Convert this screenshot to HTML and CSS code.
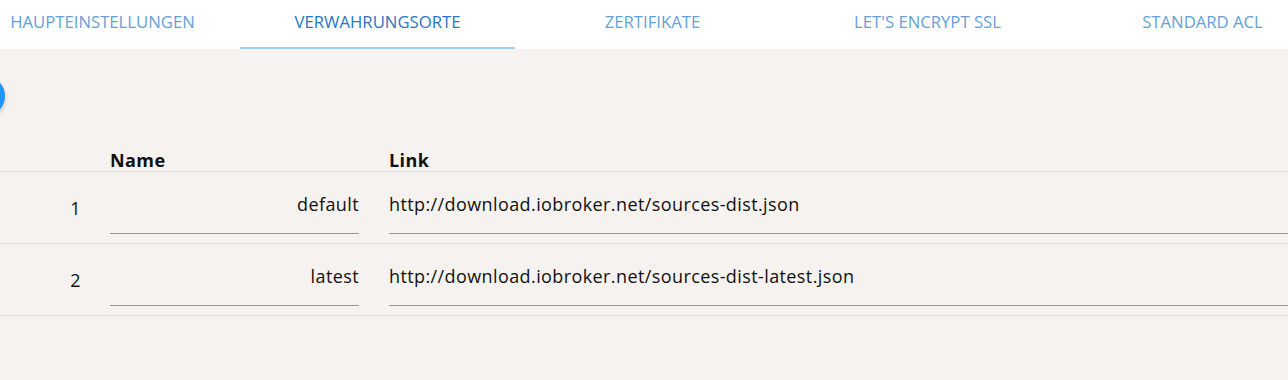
FILE: index.html
```html
<!DOCTYPE html>
<html lang="de">
<head>
<meta charset="utf-8">
<title>Verwahrungsorte</title>
<link rel="stylesheet" href="styles.css">
</head>
<body>
<div class="page">
  <nav class="tabs">
    <div class="tab">HAUPTEINSTELLUNGEN</div>
    <div class="tab active">VERWAHRUNGSORTE</div>
    <div class="tab">ZERTIFIKATE</div>
    <div class="tab">LET'S ENCRYPT SSL</div>
    <div class="tab">STANDARD ACL</div>
  </nav>
  <div class="toolbar">
    <button class="fab" aria-label="Hinzufügen"></button>
  </div>
  <div class="table">
    <div class="row head">
      <div class="cell idx"></div>
      <div class="cell">Name</div>
      <div class="cell">Link</div>
    </div>
    <div class="row">
      <div class="cell idx">1</div>
      <div class="field name">default</div>
      <div class="field link">http://download.iobroker.net/sources-dist.json</div>
    </div>
    <div class="row">
      <div class="cell idx">2</div>
      <div class="field name">latest</div>
      <div class="field link">http://download.iobroker.net/sources-dist-latest.json</div>
    </div>
  </div>
</div>
</body>
</html>
```

FILE: styles.css
```css
html, body {
  margin: 0;
  padding: 0;
  height: 100%;
  overflow: hidden;
  background: #f5f2ef;
}
body {
  font-family: "Open Sans", "Noto Sans", sans-serif;
  color: #111;
}
.page {
  margin-left: -35px;
  width: 1400px;
}
.tabs {
  display: flex;
  background: #fff;
  height: 49px;
}
.tab {
  width: 275px;
  box-sizing: border-box;
  display: flex;
  align-items: center;
  justify-content: center;
  font-size: 16.7px;
  color: #65a0da;
  padding-bottom: 5px;
  border-bottom: 2px solid transparent;
}
.tab.active {
  color: #2678c4;
  border-bottom-color: #9fd0ee;
}
.toolbar {
  padding-top: 27px;
  height: 40px;
  padding-bottom: 24px;
}
.fab {
  display: block;
  width: 40px;
  height: 40px;
  border-radius: 50%;
  border: 0;
  padding: 0;
  background: #2196f3;
  box-shadow: 0 2px 4px rgba(0,0,0,0.2);
}
.row {
  display: grid;
  grid-template-columns: 115px 249px 1fr;
  column-gap: 30px;
  height: 71px;
  border-bottom: 1px solid #dedad6;
  font-size: 18px;
  letter-spacing: 0.4px;
}
.row.head {
  height: 31px;
  font-weight: 700;
  align-items: end;
}
.row.head .cell {
  padding-bottom: 0;
  line-height: 22px;
}
.cell.idx {
  text-align: right;
  margin-right: -1px;
  align-self: center;
}
.row.head .cell.idx { align-self: end; }
.field {
  margin-top: 16px;
  height: 46px;
  box-sizing: border-box;
  line-height: 22px;
  padding-top: 5px;
  border-bottom: 1px solid #9a9794;
}
.field.name {
  text-align: right;
}
```
